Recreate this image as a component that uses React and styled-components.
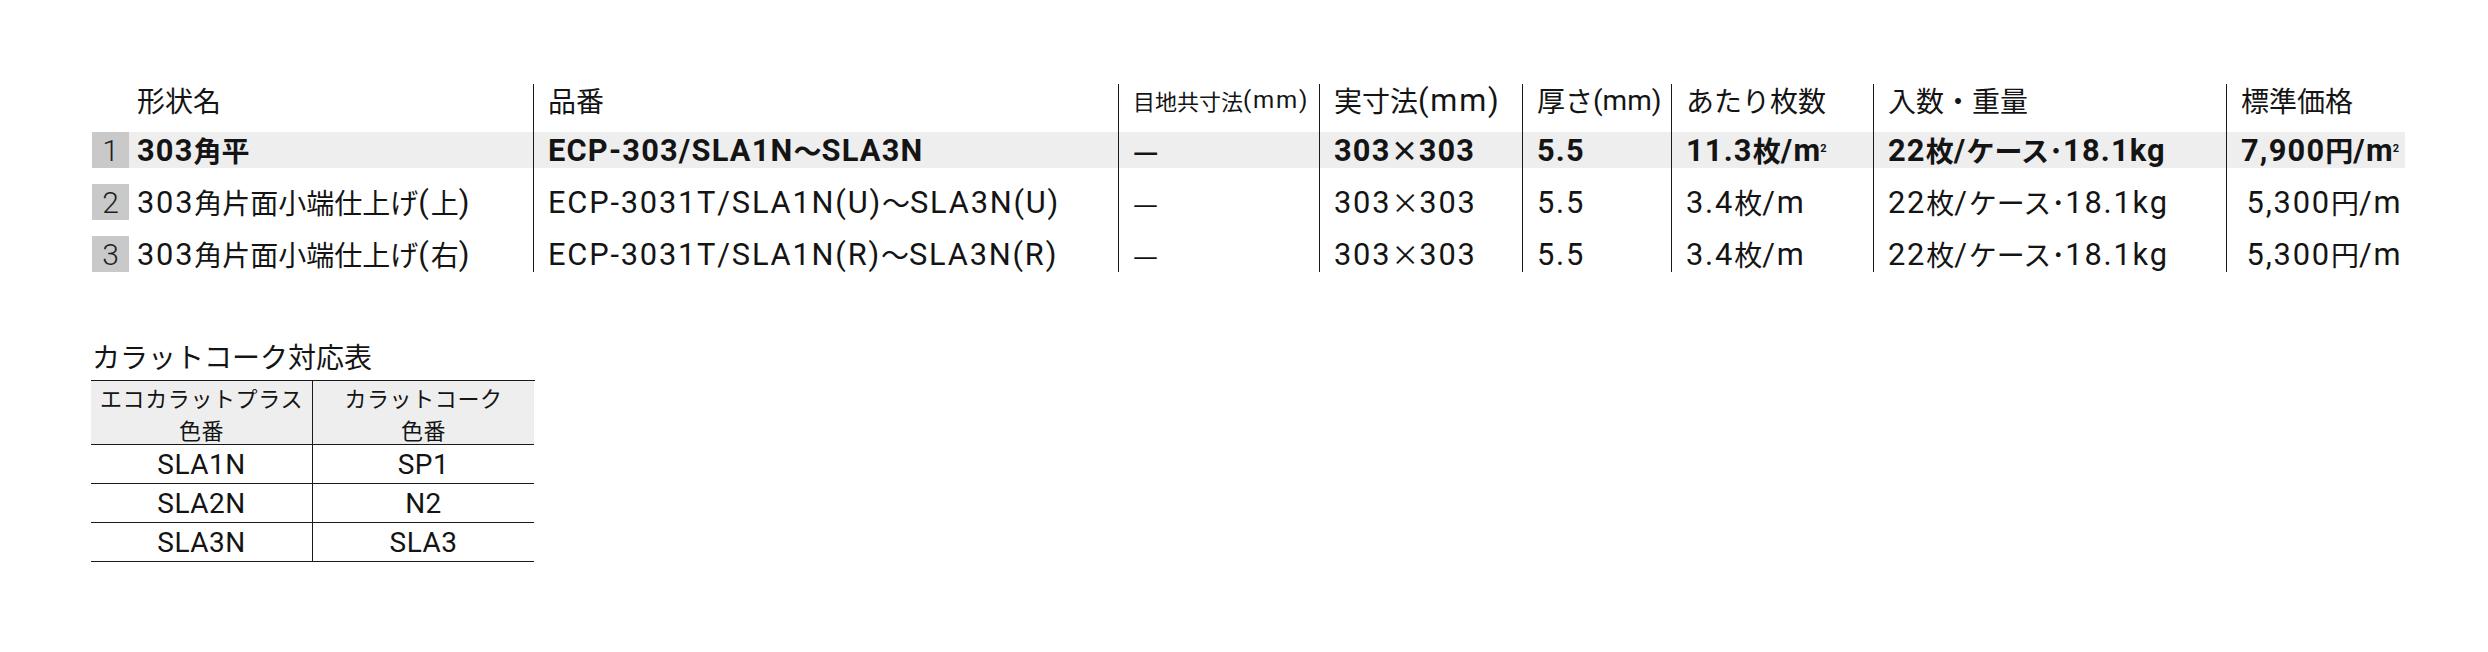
import React from "react";
import styled, { createGlobalStyle } from "styled-components";

const GlobalStyle = createGlobalStyle`
  html, body { margin: 0; padding: 0; background: #ffffff; }
  body {
    font-family: "Noto Sans CJK JP", sans-serif;
    color: #141414;
  }
`;

const Page = styled.div`
  width: 2488px;
  height: 652px;
  box-sizing: border-box;
  padding: 84px 0 0 92px;
  background: #fff;
`;

const COLS = "37px 404px 585px 201px 203px 149px 202px 353px 179px";

const MainTable = styled.div`
  display: flex;
  flex-direction: column;
  width: 2313px;
`;

const Row = styled.div`
  display: grid;
  grid-template-columns: ${COLS};
`;

const HeadCell = styled.div`
  height: 32px;
  display: flex;
  align-items: center;
  padding-left: ${(p) => (p.$first ? "45px" : "14px")};
  border-left: ${(p) => (p.$divider ? "1px solid #1a1a1a" : "none")};
  font-family: "Noto Sans CJK JP", sans-serif;
  font-size: ${(p) => (p.$small ? "22px" : "28px")};
  white-space: nowrap;
  grid-column: ${(p) => (p.$first ? "1 / span 2" : "auto")};
`;

const Cell = styled.div`
  padding-top: 16px;
  border-left: ${(p) => (p.$divider ? "1px solid #1a1a1a" : "none")};
`;

const CellBody = styled.div`
  height: 36px;
  display: flex;
  align-items: center;
  padding-left: ${(p) => (p.$tight ? "8px" : "14px")};
  background: ${(p) => (p.$hl ? "#eeeeee" : "transparent")};
  font-family: "Noto Sans CJK JP", sans-serif;
  font-size: 28px;
  font-weight: ${(p) => (p.$hl ? 700 : 400)};
  white-space: nowrap;
`;

const Latin = styled.span`
  font-family: Roboto, "Liberation Sans", sans-serif;
  font-size: ${(p) => (p.$tight ? "1em" : "1.1em")};
  letter-spacing: ${(p) => (p.$tight ? "0px" : p.$bold ? "1.2px" : "1.8px")};
`;

const Badge = styled.div`
  height: 36px;
  background: #c9c9c9;
  display: flex;
  align-items: center;
  justify-content: center;
  font-family: Roboto, sans-serif;
  font-size: 30px;
  font-weight: 300;
  color: #1e1e1e;
`;

const Sup = styled.span`
  font-family: Roboto, sans-serif;
  font-size: 11px;
  font-weight: 700;
  vertical-align: top;
  line-height: 1;
  margin-left: -1px;
  position: relative;
  top: -2px;
`;

const Section = styled.div`
  margin-top: 66px;
  width: 443px;
`;

const Title = styled.div`
  font-size: 28px;
  line-height: 36px;
  margin-bottom: 6px;
`;

const ColorTable = styled.div`
  display: grid;
  grid-template-columns: 221px 222px;
  border-top: 1px solid #1a1a1a;
  margin-left: -1px;
`;

const CTHead = styled.div`
  height: 63px;
  background: #eeeeee;
  border-bottom: 1px solid #1a1a1a;
  border-left: ${(p) => (p.$divider ? "1px solid #1a1a1a" : "none")};
  display: flex;
  flex-direction: column;
  align-items: center;
  justify-content: center;
  font-size: 22px;
  letter-spacing: 0.6px;
`;

const CTLine = styled.span`
  display: block;
  height: 32px;
  line-height: 32px;
  flex-shrink: 0;
`;

const CTCell = styled.div`
  height: 38px;
  border-bottom: 1px solid #1a1a1a;
  border-left: ${(p) => (p.$divider ? "1px solid #1a1a1a" : "none")};
  display: flex;
  align-items: center;
  justify-content: center;
  font-family: Roboto, sans-serif;
  font-size: 28px;
  letter-spacing: 0.5px;
`;

const LATIN_RUN = /([A-Za-z0-9.,\-\/()]+)/;

function Mixed({ text, bold, sup, tight }) {
  const parts = text.split(LATIN_RUN);
  return (
    <>
      {parts.map((part, i) =>
        i % 2 ? (
          <Latin key={i} $bold={bold} $tight={tight}>
            {part}
          </Latin>
        ) : (
          part
        )
      )}
      {sup && <Sup>2</Sup>}
    </>
  );
}

const rows = [
  {
    n: "1",
    hl: true,
    cells: [
      { t: "303角平" },
      { t: "ECP-303/SLA1N～SLA3N" },
      { t: "—" },
      { t: "303×303" },
      { t: "5.5" },
      { t: "11.3枚/m", sup: true },
      { t: "22枚/ケース･18.1kg" },
      { t: "7,900円/m", sup: true },
    ],
  },
  {
    n: "2",
    cells: [
      { t: "303角片面小端仕上げ(上)" },
      { t: "ECP-3031T/SLA1N(U)～SLA3N(U)" },
      { t: "—" },
      { t: "303×303" },
      { t: "5.5" },
      { t: "3.4枚/m" },
      { t: "22枚/ケース･18.1kg" },
      { t: "\u20095,300円/m" },
    ],
  },
  {
    n: "3",
    cells: [
      { t: "303角片面小端仕上げ(右)" },
      { t: "ECP-3031T/SLA1N(R)～SLA3N(R)" },
      { t: "—" },
      { t: "303×303" },
      { t: "5.5" },
      { t: "3.4枚/m" },
      { t: "22枚/ケース･18.1kg" },
      { t: "\u20095,300円/m" },
    ],
  },
];

const headers = [
  { t: "品番" },
  { t: "目地共寸法(mm)", small: true },
  { t: "実寸法(mm)" },
  { t: "厚さ(mm)", tight: true },
  { t: "あたり枚数" },
  { t: "入数・重量" },
  { t: "標準価格" },
];

const colorRows = [
  ["SLA1N", "SP1"],
  ["SLA2N", "N2"],
  ["SLA3N", "SLA3"],
];

export default function App() {
  return (
    <>
      <GlobalStyle />
      <Page>
        <MainTable>
          <Row>
            <HeadCell $first>形状名</HeadCell>
            {headers.map((h) => (
              <HeadCell key={h.t} $divider $small={h.small}>
                <Mixed text={h.t} tight={h.tight} />
              </HeadCell>
            ))}
          </Row>
          {rows.map((r) => (
            <Row key={r.n}>
              <Cell>
                <Badge>{r.n}</Badge>
              </Cell>
              {r.cells.map((c, i) => (
                <Cell key={i} $divider={i > 0}>
                  <CellBody $hl={r.hl} $tight={i === 0}>
                    <Mixed text={c.t} bold={r.hl} sup={c.sup} />
                  </CellBody>
                </Cell>
              ))}
            </Row>
          ))}
        </MainTable>

        <Section>
          <Title>カラットコーク対応表</Title>
          <ColorTable>
            <CTHead>
              <CTLine>エコカラットプラス</CTLine>
              <CTLine>色番</CTLine>
            </CTHead>
            <CTHead $divider>
              <CTLine>カラットコーク</CTLine>
              <CTLine>色番</CTLine>
            </CTHead>
            {colorRows.map(([a, b]) => (
              <React.Fragment key={a}>
                <CTCell>{a}</CTCell>
                <CTCell $divider>{b}</CTCell>
              </React.Fragment>
            ))}
          </ColorTable>
        </Section>
      </Page>
    </>
  );
}
